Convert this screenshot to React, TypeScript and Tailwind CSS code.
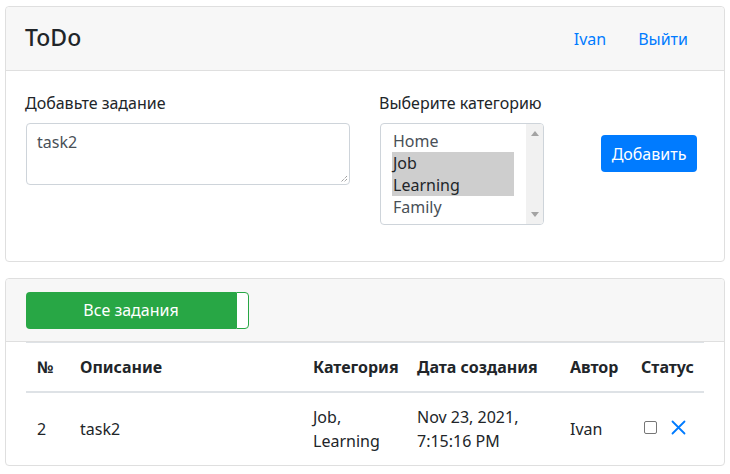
import React from 'react'

const font = { fontFamily: '"Noto Sans", "Open Sans", sans-serif' }

function CategoryList() {
  const options = [
    { name: 'Home', selected: false },
    { name: 'Job', selected: true },
    { name: 'Learning', selected: true },
    { name: 'Family', selected: false },
  ]
  return (
    <div className="w-[164px] h-[102px] border border-[#ced4da] rounded bg-white flex overflow-hidden">
      <div className="flex-1 pl-3 pr-[12px] pt-[6px]">
        {options.map((o) => (
          <div
            key={o.name}
            className={`h-[22px] leading-[22px] text-base ${o.selected ? 'bg-[#cecece] text-[#212529] -ml-[1px] pl-[1px]' : 'text-[#495057]'}`}
          >
            {o.name}
          </div>
        ))}
      </div>
      <div className="w-[17px] bg-[#f1f1f1] flex flex-col items-center justify-between py-[7px]">
        <svg width="8" height="5" viewBox="0 0 8 5"><path d="M4 0 L8 5 L0 5 Z" fill="#a3a3a3" /></svg>
        <svg width="8" height="5" viewBox="0 0 8 5"><path d="M0 0 L8 0 L4 5 Z" fill="#a3a3a3" /></svg>
      </div>
    </div>
  )
}

export default function App() {
  return (
    <div className="w-[730px] h-[474px] bg-white text-[#212529] px-[5px] pt-[6px]" style={font}>
      {/* Form card */}
      <div className="border border-[#dfdfdf] rounded">
        <div className="h-[64px] bg-[#f7f7f7] border-b border-[#dfdfdf] flex items-center justify-between pl-5 pr-5 rounded-t">
          <h3 className="text-[23px] font-medium leading-none -mt-[2px] -ml-[1px]">ToDo</h3>
          <nav className="flex">
            <a className="px-4 py-2 text-base text-[#007bff]">Ivan</a>
            <a className="px-4 py-2 text-base text-[#007bff]">Выйти</a>
          </nav>
        </div>
        <div className="flex px-5 pt-5 pb-[36px]">
          <div className="w-[324px]">
            <div className="text-base leading-6 mb-2 -ml-[1px]">Добавьте задание</div>
            <div className="relative h-[62px] border border-[#ced4da] rounded pl-[10px] pr-3 py-[6px] text-base leading-6 text-[#495057]">
              task2
              <svg className="absolute right-[1px] bottom-[1px]" width="9" height="9" viewBox="0 0 9 9">
                <path d="M8 2 L2 8 M8 5 L5 8" stroke="#777" strokeWidth="1" strokeDasharray="1 1" />
              </svg>
            </div>
          </div>
          <div className="ml-[30px]">
            <div className="text-base leading-6 mb-2 -ml-[1px]">Выберите категорию</div>
            <CategoryList />
          </div>
          <div className="ml-[57px] pt-[44px]">
            <button className="h-[37px] w-[96px] bg-[#007bff] text-white text-base rounded">Добавить</button>
          </div>
        </div>
      </div>

      {/* Tasks card */}
      <div className="mt-[16px] border border-[#dfdfdf] rounded">
        <div className="h-[63px] bg-[#f7f7f7] border-b border-[#dfdfdf] flex items-center px-5 rounded-t">
          <div className="flex h-[37px]">
            <button className="w-[210px] bg-[#28a745] text-white text-base rounded-l">Все задания</button>
            <div className="w-[13px] bg-white border border-[#28a745] rounded-r" />
          </div>
        </div>
        <div className="px-5">
          <table className="w-[678px] table-fixed border-collapse text-base">
            <colgroup>
              <col className="w-[43px]" />
              <col className="w-[233px]" />
              <col className="w-[104px]" />
              <col className="w-[153px]" />
              <col className="w-[71px]" />
              <col className="w-[74px]" />
            </colgroup>
            <thead>
              <tr className="border-t border-[#dee2e6] border-b-2">
                <th className="text-left font-bold pl-[11px] pr-3 py-3 leading-6">№</th>
                <th className="text-left font-bold pl-[11px] pr-3 py-3 leading-6">Описание</th>
                <th className="text-left font-bold pl-[11px] pr-3 py-3 leading-6">Категория</th>
                <th className="text-left font-bold pl-[11px] pr-3 py-3 leading-6">Дата создания</th>
                <th className="text-left font-bold pl-[11px] pr-3 py-3 leading-6">Автор</th>
                <th className="text-left font-bold pl-[11px] pr-3 py-3 leading-6">Статус</th>
              </tr>
            </thead>
            <tbody>
              <tr>
                <td className="pl-[11px] pr-3 py-3 leading-6 align-middle">2</td>
                <td className="pl-[11px] pr-3 py-3 leading-6 align-middle">task2</td>
                <td className="pl-[11px] pr-3 py-3 leading-6 align-middle">Job,<br />Learning</td>
                <td className="pl-[11px] pr-3 py-3 leading-6 align-middle">Nov 23, 2021,<br />7:15:16 PM</td>
                <td className="pl-[11px] pr-3 py-3 leading-6 align-middle">Ivan</td>
                <td className="px-3 py-3 align-middle">
                  <div className="flex items-center pl-[2px] -mt-[4px]">
                    <span className="w-[13px] h-[13px] border border-[#767676] rounded-[2px] bg-white" />
                    <svg className="ml-[14px]" width="15" height="15" viewBox="0 0 15 15">
                      <path d="M1.5 1.5 L13.5 13.5 M13.5 1.5 L1.5 13.5" stroke="#007bff" strokeWidth="1.8" strokeLinecap="round" />
                    </svg>
                  </div>
                </td>
              </tr>
            </tbody>
          </table>
        </div>
      </div>
    </div>
  )
}
